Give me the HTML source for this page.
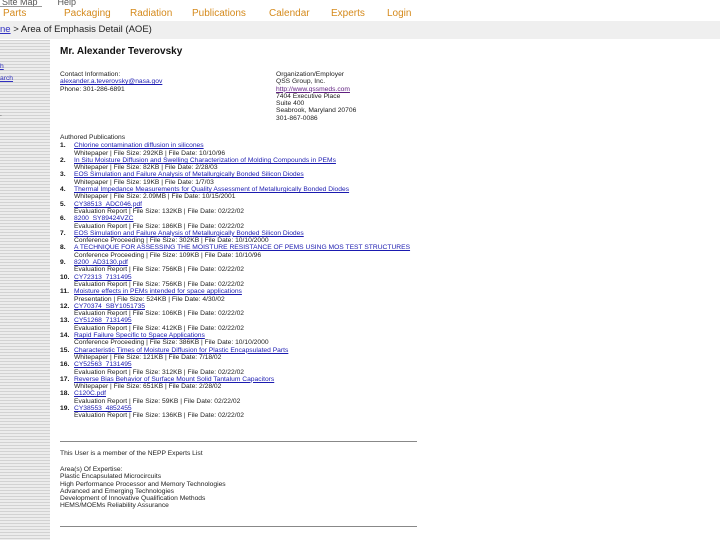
<!DOCTYPE html><html><head><style>
body{margin:0;width:720px;height:540px;overflow:hidden;background:#fff;font-family:"Liberation Sans",sans-serif;position:relative}
.a{position:absolute;white-space:nowrap}
.nav{color:#d58a1c;font-size:10px;top:8px}
.s{font-size:6.7px;line-height:7.3px;color:#222}
a{color:#1a1ab0;text-decoration:underline}
.side{position:absolute;left:0;top:40px;width:50px;height:500px;background:repeating-linear-gradient(#d2d2d2 0 1px,#ececec 1px 3px)}
ol{margin:0;padding:0;list-style:none}
li{height:14.6px}
.n{display:inline-block;width:14px;font-weight:bold;color:#111}
.sub{padding-left:14px}
hr{position:absolute;left:60px;width:357px;border:0;border-top:1px solid #888;margin:0}
</style></head><body>
<div class="a" style="top:-3px;left:2px;font-size:9px;color:#555">Site Map&nbsp;&nbsp;&nbsp;&nbsp;&nbsp;&nbsp;&nbsp;&nbsp;Help</div>
<div class="a" style="top:6px;left:0;width:42px;border-top:1px solid #999"></div>
<div class="a nav" style="left:3px">Parts</div>
<div class="a nav" style="left:64px">Packaging</div>
<div class="a nav" style="left:130px">Radiation</div>
<div class="a nav" style="left:192px">Publications</div>
<div class="a nav" style="left:269px">Calendar</div>
<div class="a nav" style="left:331px">Experts</div>
<div class="a nav" style="left:387px">Login</div>
<div class="a" style="top:21px;left:0;width:720px;height:18px;background:#efefef"></div>
<div class="a" style="top:24px;left:0;font-size:9.5px;color:#222"><a style="color:#3030c0">ne</a> &gt; Area of Emphasis Detail (AOE)</div>
<div class="side"></div>
<div class="a s" style="top:63px;left:0"><a style="color:#3030c0">h</a></div>
<div class="a s" style="top:75px;left:0"><a style="color:#3030c0">arch</a></div>
<div class="a s" style="top:111px;left:0">.</div>
<div class="a" style="top:46px;left:60px;font-size:10px;font-weight:bold;color:#111">Mr. Alexander Teverovsky</div>
<div class="a s" style="top:71px;left:60px">Contact Information:<br><a>alexander.a.teverovsky@nasa.gov</a><br>Phone: 301-286-6891</div>
<div class="a s" style="top:71px;left:276px">Organization/Employer<br>QSS Group, Inc.<br><a style="color:#602080">http://www.qssmeds.com</a><br>7404 Executive Place<br>Suite 400<br>Seabrook, Maryland 20706<br>301-867-0086</div>
<div class="a s" style="top:134px;left:60px">Authored Publications<ol style="margin-top:1px">
<li><span class="n">1.</span><a>Chlorine contamination diffusion in silicones</a><br><span class="sub">Whitepaper | File Size: 292KB | File Date: 10/10/96</span></li>
<li><span class="n">2.</span><a>In Situ Moisture Diffusion and Swelling Characterization of Molding Compounds in PEMs</a><br><span class="sub">Whitepaper | File Size: 82KB | File Date: 2/28/03</span></li>
<li><span class="n">3.</span><a>EOS Simulation and Failure Analysis of Metallurgically Bonded Silicon Diodes</a><br><span class="sub">Whitepaper | File Size: 19KB | File Date: 1/7/03</span></li>
<li><span class="n">4.</span><a>Thermal Impedance Measurements for Quality Assessment of Metallurgically Bonded Diodes</a><br><span class="sub">Whitepaper | File Size: 2.09MB | File Date: 10/15/2001</span></li>
<li><span class="n">5.</span><a>CY38513_ADC046.pdf</a><br><span class="sub">Evaluation Report | File Size: 132KB | File Date: 02/22/02</span></li>
<li><span class="n">6.</span><a>8200_SY89424VZC</a><br><span class="sub">Evaluation Report | File Size: 186KB | File Date: 02/22/02</span></li>
<li><span class="n">7.</span><a>EOS Simulation and Failure Analysis of Metallurgically Bonded Silicon Diodes</a><br><span class="sub">Conference Proceeding | File Size: 302KB | File Date: 10/10/2000</span></li>
<li><span class="n">8.</span><a>A TECHNIQUE FOR ASSESSING THE MOISTURE RESISTANCE OF PEMS USING MOS TEST STRUCTURES</a><br><span class="sub">Conference Proceeding | File Size: 109KB | File Date: 10/10/96</span></li>
<li><span class="n">9.</span><a>8200_AD3130.pdf</a><br><span class="sub">Evaluation Report | File Size: 756KB | File Date: 02/22/02</span></li>
<li><span class="n">10.</span><a>CY72313_7131495</a><br><span class="sub">Evaluation Report | File Size: 756KB | File Date: 02/22/02</span></li>
<li><span class="n">11.</span><a>Moisture effects in PEMs intended for space applications</a><br><span class="sub">Presentation | File Size: 524KB | File Date: 4/30/02</span></li>
<li><span class="n">12.</span><a>CY70374_SBY1051735</a><br><span class="sub">Evaluation Report | File Size: 106KB | File Date: 02/22/02</span></li>
<li><span class="n">13.</span><a>CY51268_7131495</a><br><span class="sub">Evaluation Report | File Size: 412KB | File Date: 02/22/02</span></li>
<li><span class="n">14.</span><a>Rapid Failure Specific to Space Applications</a><br><span class="sub">Conference Proceeding | File Size: 386KB | File Date: 10/10/2000</span></li>
<li><span class="n">15.</span><a>Characteristic Times of Moisture Diffusion for Plastic Encapsulated Parts</a><br><span class="sub">Whitepaper | File Size: 121KB | File Date: 7/18/02</span></li>
<li><span class="n">16.</span><a>CY52563_7131495</a><br><span class="sub">Evaluation Report | File Size: 312KB | File Date: 02/22/02</span></li>
<li><span class="n">17.</span><a>Reverse Bias Behavior of Surface Mount Solid Tantalum Capacitors</a><br><span class="sub">Whitepaper | File Size: 651KB | File Date: 2/28/02</span></li>
<li><span class="n">18.</span><a>C120C.pdf</a><br><span class="sub">Evaluation Report | File Size: 59KB | File Date: 02/22/02</span></li>
<li><span class="n">19.</span><a>CY38553_4852455</a><br><span class="sub">Evaluation Report | File Size: 136KB | File Date: 02/22/02</span></li>
</ol></div>
<hr style="top:441px">
<div class="a s" style="top:450px;left:60px">This User is a member of the NEPP Experts List</div>
<div class="a s" style="top:466px;left:60px">Area(s) Of Expertise:<br>Plastic Encapsulated Microcircuits<br>High Performance Processor and Memory Technologies<br>Advanced and Emerging Technologies<br>Development of Innovative Qualification Methods<br>HEMS/MOEMs Reliability Assurance</div>
<hr style="top:526px">
</body></html>
